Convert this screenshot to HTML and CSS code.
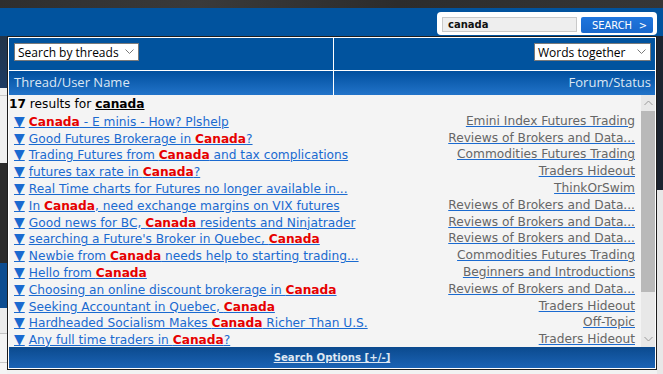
FILE: index.html
```html
<!DOCTYPE html>
<html>
<head>
<meta charset="utf-8">
<link rel="stylesheet" href="styles.css">
</head>
<body>
<div class="topstrip"></div>
<div class="band">
  <div class="searchbox">
    <div class="search-input">canada</div>
    <div class="search-btn"><span>SEARCH</span><span class="gt">&gt;</span></div>
  </div>
</div>
<div class="panel">
  <div class="grid filters">
    <div class="cell">
      <div class="select sel-left"><span>Search by threads</span><svg class="chev" width="9" height="6" viewBox="0 0 9 6"><polyline points="0.5,0.5 4.5,4.5 8.5,0.5" fill="none" stroke="#7a7a7a" stroke-width="1"/></svg></div>
    </div>
    <div class="cell right">
      <div class="select sel-right"><span>Words together</span><svg class="chev" width="9" height="6" viewBox="0 0 9 6"><polyline points="0.5,0.5 4.5,4.5 8.5,0.5" fill="none" stroke="#7a7a7a" stroke-width="1"/></svg></div>
    </div>
  </div>
  <div class="grid head">
    <div class="cell">Thread/User Name</div>
    <div class="cell right">Forum/Status</div>
  </div>
  <div class="results">
    <div class="list">
      <div class="line count"><b>17</b>&nbsp;results for <b class="term">canada</b></div>
      <div class="line row"><span class="left"><a class="tri">▼</a><a class="title"><b class="hl">Canada</b> - E minis - How? Plshelp</a></span><a class="forum">Emini Index Futures Trading</a></div>
      <div class="line row"><span class="left"><a class="tri">▼</a><a class="title">Good Futures Brokerage in <b class="hl">Canada</b>?</a></span><a class="forum">Reviews of Brokers and Data...</a></div>
      <div class="line row"><span class="left"><a class="tri">▼</a><a class="title">Trading Futures from <b class="hl">Canada</b> and tax complications</a></span><a class="forum">Commodities Futures Trading</a></div>
      <div class="line row"><span class="left"><a class="tri">▼</a><a class="title">futures tax rate in <b class="hl">Canada</b>?</a></span><a class="forum">Traders Hideout</a></div>
      <div class="line row"><span class="left"><a class="tri">▼</a><a class="title">Real Time charts for Futures no longer available in...</a></span><a class="forum">ThinkOrSwim</a></div>
      <div class="line row"><span class="left"><a class="tri">▼</a><a class="title">In <b class="hl">Canada</b>, need exchange margins on VIX futures</a></span><a class="forum">Reviews of Brokers and Data...</a></div>
      <div class="line row"><span class="left"><a class="tri">▼</a><a class="title">Good news for BC, <b class="hl">Canada</b> residents and Ninjatrader</a></span><a class="forum">Reviews of Brokers and Data...</a></div>
      <div class="line row"><span class="left"><a class="tri">▼</a><a class="title">searching a Future's Broker in Quebec, <b class="hl">Canada</b></a></span><a class="forum">Reviews of Brokers and Data...</a></div>
      <div class="line row"><span class="left"><a class="tri">▼</a><a class="title">Newbie from <b class="hl">Canada</b> needs help to starting trading...</a></span><a class="forum">Commodities Futures Trading</a></div>
      <div class="line row"><span class="left"><a class="tri">▼</a><a class="title">Hello from <b class="hl">Canada</b></a></span><a class="forum">Beginners and Introductions</a></div>
      <div class="line row"><span class="left"><a class="tri">▼</a><a class="title">Choosing an online discount brokerage in <b class="hl">Canada</b></a></span><a class="forum">Reviews of Brokers and Data...</a></div>
      <div class="line row"><span class="left"><a class="tri">▼</a><a class="title">Seeking Accountant in Quebec, <b class="hl">Canada</b></a></span><a class="forum">Traders Hideout</a></div>
      <div class="line row"><span class="left"><a class="tri">▼</a><a class="title">Hardheaded Socialism Makes <b class="hl">Canada</b> Richer Than U.S.</a></span><a class="forum">Off-Topic</a></div>
      <div class="line row"><span class="left"><a class="tri">▼</a><a class="title">Any full time traders in <b class="hl">Canada</b>?</a></span><a class="forum">Traders Hideout</a></div>
    </div>
    <div class="scroll">
      <div class="sb-btn"><svg width="9" height="6" viewBox="0 0 9 6"><polyline points="0.5,5 4.5,1 8.5,5" fill="none" stroke="#9a9a9a" stroke-width="1"/></svg></div>
      <div class="sb-thumb"></div>
      <div class="sb-track"></div>
      <div class="sb-btn"><svg width="9" height="6" viewBox="0 0 9 6"><polyline points="0.5,1 4.5,5 8.5,1" fill="none" stroke="#9a9a9a" stroke-width="1"/></svg></div>
    </div>
  </div>
  <div class="footer"><a class="options">Search Options [+/-]</a></div>
</div>
</body>
</html>
```
FILE: styles.css
```css
* { box-sizing: border-box; }
html, body { margin: 0; padding: 0; }
body {
  width: 663px;
  height: 374px;
  overflow: hidden;
  font-family: "DejaVu Sans", Verdana, sans-serif;
  background:
    linear-gradient(to bottom,
      #303030 0, #303030 8px,
      #01539e 8px, #01539e 36px,
      #223449 36px, #1b3a63 88px,
      #f0f0f0 88px, #f0f0f0 95px,
      #c8c8c8 95px, #c8c8c8 96px,
      #f0f0f0 96px, #f0f0f0 163px,
      #2b2b2b 163px, #2b2b2b 263px,
      #0d4d91 263px, #0d4d91 308px,
      #ececec 308px, #ececec 333px,
      #c4c4c4 333px, #c4c4c4 334px,
      #f4f4f4 334px, #f4f4f4 362px,
      #c8c8c8 362px, #c8c8c8 363px,
      #f4f4f4 363px) left top / 7px 100% no-repeat,
    linear-gradient(to bottom,
      #303030 0, #303030 8px,
      #01539e 8px, #01539e 36px,
      #1c2430 36px, #1c2430 190px,
      #e8e8e8 190px) right top / 6px 100% no-repeat,
    #f2f2f2;
}

.topstrip {
  height: 8px;
  background: linear-gradient(to right, #2e2e2e, #3a3a3a 30%, #2c2c2c 60%, #363636);
}

.band {
  height: 28px;
  background: #01539e;
  display: flex;
  justify-content: flex-end;
  align-items: flex-start;
  padding: 4px 6px 0 0;
}

.searchbox {
  width: 220px;
  height: 23px;
  background: #fff;
  border-radius: 4px;
  display: flex;
  gap: 4px;
  padding: 5px 4px 0 5px;
}

.search-input {
  width: 135px;
  height: 15px;
  background: #eeeeee;
  border: 1px solid #c9c9c9;
  font-family: "DejaVu Sans", Verdana, sans-serif;
  font-weight: bold;
  font-size: 10px;
  line-height: 13px;
  padding-left: 5px;
  color: #111;
}

.search-btn {
  width: 72px;
  height: 16px;
  background: linear-gradient(#1f76dd, #1767cc);
  border-radius: 2px;
  color: #fff;
  font-family: "DejaVu Sans Condensed", "DejaVu Sans", sans-serif;
  font-stretch: condensed;
  font-size: 11px;
  display: flex;
  align-items: center;
  padding-left: 11px;
}
.search-btn .gt { margin-left: auto; margin-right: 6px; }

.panel {
  margin: 0 6px 0 7px;
  height: 334px;
  border: 1px solid #1d1d1d;
  background: #fff;
  padding: 1px;
  display: flex;
  flex-direction: column;
}

.grid {
  display: grid;
  grid-template-columns: 324px 1fr;
  column-gap: 1px;
}
.filters { height: 32px; }
.filters .cell {
  background: #01539e;
  display: flex;
  align-items: center;
  padding: 0 4px 4px 5px;
}
.cell.right { justify-content: flex-end; }

.select {
  height: 18px;
  background: #fff;
  border: 1px solid #7a7a7a;
  display: flex;
  align-items: center;
  justify-content: space-between;
  padding: 0 4px 0 3px;
  font-family: "Open Sans", sans-serif;
  font-size: 12px;
  color: #000;
}
.sel-left { width: 125px; }
.sel-right { width: 117px; }

.head { height: 24px; margin-top: 1px; }
.head .cell {
  background: linear-gradient(#004f9e, #2273c9);
  color: #dce7f4;
  font-family: "Open Sans", sans-serif;
  font-size: 13px;
  display: flex;
  align-items: center;
  padding: 0 4px 3px 5px;
}

.results {
  height: 252px;
  background: #f4f4f4;
  display: flex;
}
.list {
  flex: 1;
  overflow: hidden;
  padding-right: 6px;
  padding-top: 1px;
}
.line {
  height: 16.8px;
  line-height: 16.8px;
  font-size: 12.2px;
  white-space: nowrap;
  color: #000;
}
.count .term { text-decoration: underline; }
.row {
  display: flex;
  justify-content: space-between;
  padding-left: 5px;
}
.tri {
  color: #1a6ad0;
  text-decoration: underline;
  font-size: 14px;
  line-height: 16px;
}
.title {
  margin-left: 4px;
  color: #1a6ad0;
  text-decoration: underline;
}
.hl { color: #e60000; }
.forum {
  color: #666;
  text-decoration: underline;
  text-decoration-color: #1a6ad0;
}

.scroll {
  width: 14px;
  display: flex;
  flex-direction: column;
  background: #e8e8e8;
}
.sb-btn {
  height: 16px;
  display: flex;
  align-items: center;
  justify-content: center;
}
.sb-thumb { height: 181px; background: #b9b9b9; }
.sb-track { flex: 1; }

.footer {
  height: 21px;
  background: linear-gradient(#0b4a8e, #1b63b5);
  display: flex;
  align-items: center;
  justify-content: center;
}
.options {
  color: #dfe8f3;
  text-decoration: underline;
  font-family: "DejaVu Sans Condensed", "DejaVu Sans", sans-serif;
  font-stretch: condensed;
  font-weight: bold;
  font-size: 11.3px;
}
```
